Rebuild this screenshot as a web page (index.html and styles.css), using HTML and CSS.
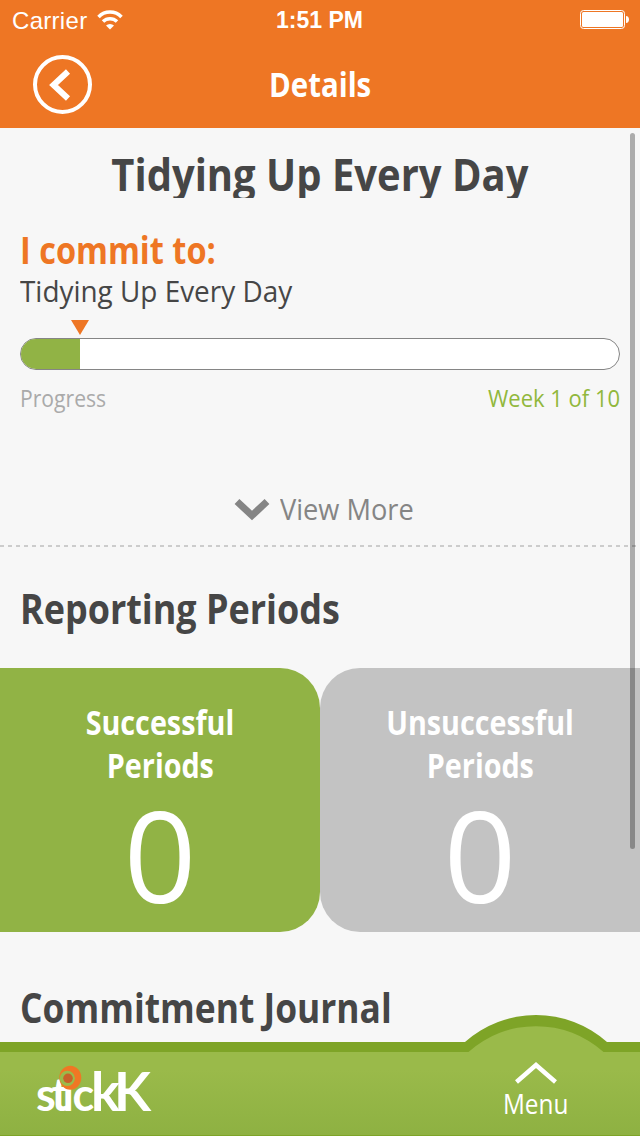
FILE: index.html
```html
<!doctype html>
<html lang="en">
  <head>
    <meta charset="utf-8">
    <title>stickK</title>
    <link rel="stylesheet" href="styles.css">
  </head>

  <body>
    <header>
      <div class="status-bar">
        <div class="carrier">
          <span class="carrier-name">Carrier</span>
          <svg width="26" height="20" viewBox="0 0 26 20">
            <path d="M1.500 7a16 16 0 0 1 23 0" fill="none" stroke="#fff" stroke-width="3.500"/>
            <path d="M6 11.500a10 10 0 0 1 14 0" fill="none" stroke="#fff" stroke-width="3.500"/>
            <path d="M13 19.500l-4-4a5.800 5.800 0 0 1 8 0z" fill="#fff"/>
          </svg>
        </div>
        <span class="clock">1:51 PM</span>
        <svg class="battery" width="50" height="20" viewBox="0 0 50 20">
          <rect x=".5" y=".5" width="44" height="18" rx="3" fill="none" stroke="#fff"/>
          <rect x="2" y="2" width="41" height="15" rx="1.500" fill="#fff"/>
          <path d="M46 6c4 0 4 7 0 7z" fill="#fff"/>
        </svg>
      </div>
      <div class="nav-bar">
        <svg class="back" width="60" height="60" viewBox="0 0 60 60">
          <circle cx="29.500" cy="30.500" r="27.500" fill="none" stroke="#fff" stroke-width="4"/>
          <path d="M35 17.500L20.500 31l14.500 13.500" fill="none" stroke="#fff" stroke-width="6"/>
        </svg>
        <span class="nav-title">Details</span>
      </div>
    </header>

    <main>
      <h1><span>Tidying Up Every Day</span></h1>

      <!-- Commitment -->
      <section class="commitment">
        <h2><span class="commit-label">I commit to:</span></h2>
        <p><span class="commit-text">Tidying Up Every Day</span></p>
        <div class="marker-track">
          <div class="marker" style="margin-left: 10%"></div>
        </div>
        <div class="progress">
          <div class="progress-fill" style="width: 10%"></div>
        </div>
        <div class="progress-labels">
          <span class="progress-name">Progress</span>
          <span class="week">Week 1 of 10</span>
        </div>
      </section>

      <div class="view-more">
        <svg width="36" height="24" viewBox="0 0 36 24">
          <path d="M3 4.500L18 18.500 33 4.500" fill="none" stroke="#858585" stroke-width="7"/>
        </svg>
        <span>View More</span>
      </div>
      <div class="divider"></div>

      <!-- Reporting periods -->
      <h2 class="section-title"><span>Reporting Periods</span></h2>
      <section class="periods">
        <div class="period successful">
          <span class="period-name">Successful</span>
          <span class="period-name">Periods</span>
          <span class="count">0</span>
        </div>
        <div class="period unsuccessful">
          <span class="period-name">Unsuccessful</span>
          <span class="period-name">Periods</span>
          <span class="count">0</span>
        </div>
      </section>

      <h2 class="section-title journal"><span>Commitment Journal</span></h2>
    </main>

    <div class="scrollbar"></div>

    <!-- Bottom menu -->
    <footer>
      <svg class="footer-shape" width="640" height="121" viewBox="0 0 640 121">
        <defs>
          <linearGradient id="green" x1="0" y1="0" x2="0" y2="1">
            <stop offset="0" stop-color="#9aba4a"/>
            <stop offset=".4" stop-color="#9aba4a"/>
            <stop offset="1" stop-color="#8eb142"/>
          </linearGradient>
        </defs>
        <path d="M0 27H465A107 107 0 0 1 607 27H640V121H0z" fill="#7ea427"/>
        <path d="M0 37H468.500A101 101 0 0 1 603.500 37H640V120H0z" fill="url(#green)"/>
      </svg>
      <svg class="logo" width="120" height="60" viewBox="0 0 120 60">
        <text class="logo-text" x="0 15.500 26.500 36.500 55 78" y="49">stic<tspan class="k">kK</tspan></text>
        <ellipse cx="34.300" cy="15.800" rx="11" ry="12" fill="#f07724"/>
        <circle cx="31.300" cy="16.300" r="7.600" fill="#9aba4a"/>
        <circle cx="32" cy="16.300" r="4.800" fill="#c8622a"/>
      </svg>
      <div class="menu">
        <svg width="44" height="24" viewBox="0 0 44 24">
          <path d="M2.500 21L22 4l19.500 17" fill="none" stroke="#fff" stroke-width="4.500"/>
        </svg>
        <span>Menu</span>
      </div>
    </footer>
  </body>
</html>
```

FILE: styles.css
```css
body {
  margin: 0;
  width: 640px;
  height: 1136px;
  position: relative;
  overflow: hidden;
  background: #f7f7f7;
  color: #464646;
  font-family: "Open Sans", "Noto Sans", sans-serif;
}

h1, h2, p {
  margin: 0;
}

span {
  display: inline-block;
  white-space: nowrap;
}

svg {
  display: block;
}

header {
  height: 128px;
  background: #ee7624;
  color: #fff;
}

.status-bar {
  display: grid;
  grid-template-columns: 1fr auto 1fr;
  height: 40px;
  padding: 0 10px 0 12px;
  align-items: center;
  font-family: "Liberation Sans", sans-serif;
}

.carrier {
  display: flex;
  align-items: center;
  gap: 10px;
}

.carrier-name {
  padding-top: 2px;
  font-size: 24px;
  letter-spacing: 0.3px;
}

.clock {
  padding-top: 1px;
  margin-right: 3px;
  font-size: 23px;
  font-weight: bold;
}

.battery {
  justify-self: end;
}

.nav-bar {
  display: grid;
  grid-template-columns: 1fr auto 1fr;
  height: 88px;
  padding: 0 33px;
  align-items: center;
}

.nav-title {
  font-size: 34px;
  font-weight: bold;
  transform: scaleX(0.865);
}

h1 {
  height: 60px;
  margin-top: 10px;
  overflow: hidden;
  font-size: 45px;
  line-height: 72px;
  text-align: center;
}

h1 span {
  transform: scaleX(0.888);
}

.commitment {
  padding: 28px 20px 0;
}

.commitment h2 {
  font-size: 38px;
  line-height: 46px;
  color: #ee7624;
}

.commit-label {
  transform: scaleX(0.855);
  transform-origin: left;
}

.commitment p {
  height: 35px;
  font-size: 30px;
  line-height: 38px;
}

.commit-text {
  transform: scaleX(0.93);
  transform-origin: left;
}

.marker-track {
  height: 18px;
  padding-top: 13px;
}

.marker {
  width: 18px;
  height: 15px;
  background: #ee7624;
  clip-path: polygon(0 0, 100% 0, 50% 100%);
  transform: translateX(-50%);
}

.progress {
  height: 30px;
  border: 1px solid #858585;
  border-radius: 16px;
  overflow: hidden;
  background: #fff;
}

.progress-fill {
  height: 100%;
  margin-left: -1px;
  background: #91b345;
}

.progress-labels {
  display: flex;
  justify-content: space-between;
  margin-top: 12px;
  font-size: 24px;
  line-height: 32px;
}

.progress-name {
  color: #aaa;
  transform: scaleX(0.88);
  transform-origin: left;
}

.week {
  color: #91b83c;
  transform: scaleX(0.917);
  transform-origin: right;
}

.view-more {
  display: flex;
  align-items: center;
  gap: 10px;
  height: 40px;
  margin: 75px 0 0 234px;
  font-size: 30px;
  line-height: 40px;
  color: #858585;
}

.view-more span {
  transform: scaleX(0.907);
  transform-origin: left;
}

.divider {
  height: 2px;
  margin-top: 16px;
  background: repeating-linear-gradient(90deg, #ccc 0 4px, transparent 4px 8px);
}

.section-title {
  margin: 36px 20px 35px;
  font-size: 42px;
  line-height: 50px;
}

.section-title span {
  transform: scaleX(0.855);
  transform-origin: left;
}

.periods {
  display: grid;
  grid-template-columns: 1fr 1fr;
  height: 264px;
  color: #fff;
}

.period {
  display: flex;
  flex-direction: column;
  align-items: center;
  padding-top: 33px;
}

.successful {
  background: #91b345;
  border-radius: 0 40px 40px 0;
}

.unsuccessful {
  background: #c3c3c3;
  border-radius: 40px 0 0 40px;
}

.period-name {
  font-size: 34px;
  font-weight: bold;
  line-height: 43px;
  transform: scaleX(0.845);
}

.count {
  margin-top: 7px;
  font-size: 127px;
  line-height: 120px;
}

.section-title.journal {
  margin-top: 50px;
}

.journal span {
  transform: scaleX(0.842);
}

.scrollbar {
  position: absolute;
  top: 133px;
  right: 5px;
  width: 5px;
  height: 716px;
  border-radius: 3px;
  background: rgba(0, 0, 0, 0.3);
}

footer {
  position: absolute;
  left: 0;
  bottom: 0;
  width: 640px;
  height: 121px;
  display: flex;
  justify-content: space-between;
  color: #fff;
}

.footer-shape {
  position: absolute;
}

.logo {
  position: relative;
  margin: 47px 0 0 36px;
}

.logo-text {
  font-family: Lato, sans-serif;
  font-size: 45px;
  font-weight: bold;
  fill: #fff;
}

.k {
  font-size: 54px;
}

.menu {
  position: relative;
  display: flex;
  flex-direction: column;
  align-items: center;
  width: 208px;
  padding-top: 46px;
  font-size: 28px;
  line-height: 36px;
}

.menu span {
  transform: scaleX(0.87);
}
```
